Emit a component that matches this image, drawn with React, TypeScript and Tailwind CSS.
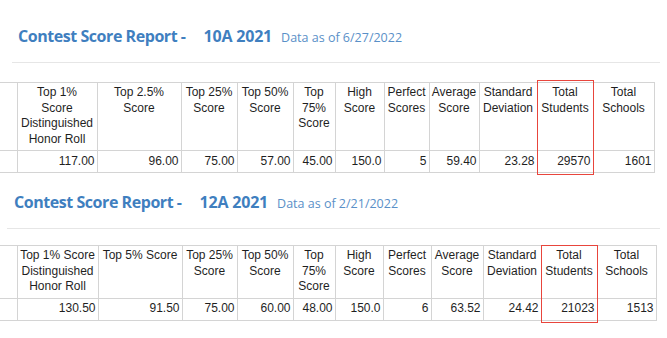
import React from "react";

type Section = {
  grade: string;
  date: string;
  cols: number[];
  headers: string[][];
  values: string[];
};

const sections: Section[] = [
  {
    grade: "10A 2021",
    date: "6/27/2022",
    cols: [80, 84, 56, 56, 42, 49, 45, 50, 58, 56, 61],
    headers: [
      ["Top 1%", "Score", "Distinguished", "Honor Roll"],
      ["Top 2.5%", "Score"],
      ["Top 25%", "Score"],
      ["Top 50%", "Score"],
      ["Top", "75%", "Score"],
      ["High", "Score"],
      ["Perfect", "Scores"],
      ["Average", "Score"],
      ["Standard", "Deviation"],
      ["Total", "Students"],
      ["Total", "Schools"],
    ],
    values: ["117.00", "96.00", "75.00", "57.00", "45.00", "150.0", "5", "59.40", "23.28", "29570", "1601"],
  },
  {
    grade: "12A 2021",
    date: "2/21/2022",
    cols: [81, 84, 55, 56, 42, 48, 48, 52, 58, 56, 59],
    headers: [
      ["Top 1% Score", "Distinguished", "Honor Roll"],
      ["Top 5% Score"],
      ["Top 25%", "Score"],
      ["Top 50%", "Score"],
      ["Top", "75%", "Score"],
      ["High", "Score"],
      ["Perfect", "Scores"],
      ["Average", "Score"],
      ["Standard", "Deviation"],
      ["Total", "Students"],
      ["Total", "Schools"],
    ],
    values: ["130.50", "91.50", "75.00", "60.00", "48.00", "150.0", "6", "63.52", "24.42", "21023", "1513"],
  },
];

const Title = ({ grade, date }: { grade: string; date: string }) => (
  <div className="flex h-[24px] items-baseline font-['Open_Sans',sans-serif] text-[#3f7fbf]">
    <span className="text-[16px] font-bold tracking-[-0.45px]">Contest Score Report -</span>
    <span className="ml-[18px] text-[16px] font-bold tracking-[-0.2px]">{grade}</span>
    <span className="ml-[9px] text-[12.5px] text-[#5a90c8]">Data as of {date}</span>
  </div>
);

const ScoreTable = ({ s, boxTop }: { s: Section; boxTop: string }) => (
  <table className="border-collapse font-['Liberation_Sans',Arial,sans-serif] text-[12px] leading-[15.5px] text-[#1f1f1f]">
    <thead>
      <tr>
        <th className="w-[17px] border-y border-[#d4d4d4] p-0" />
        {s.headers.map((h, i) => (
          <th
            key={i}
            style={{ width: s.cols[i] }}
            className="relative border border-[#d4d4d4] px-0 pt-[2px] pb-[3px] text-center align-top font-normal whitespace-nowrap"
          >
            {h.map((line, j) => (
              <div key={j}>{line}</div>
            ))}
            {i === 9 && (
              <div className={`pointer-events-none absolute -left-[1px] -right-[1px] ${boxTop} -bottom-[25px] border border-[#e8453c]`} />
            )}
          </th>
        ))}
      </tr>
    </thead>
    <tbody>
      <tr>
        <td className="h-[22px] border-y border-[#d4d4d4] p-0" />
        {s.values.map((v, i) => (
          <td key={i} className="h-[22px] border border-[#d4d4d4] pr-[2px] pl-0 text-right align-middle">
            {v}
          </td>
        ))}
      </tr>
    </tbody>
  </table>
);

export default function App() {
  return (
    <div className="h-[338px] w-[667px] overflow-hidden bg-white">
      <div className="pt-[24px]">
        <div className="pl-[18px]">
          <Title grade={sections[0].grade} date={sections[0].date} />
        </div>
        <div className="mt-[14px] ml-[12px] h-px w-[648px] bg-[#e6e6e6]" />
        <div className="mt-[19px]">
          <ScoreTable s={sections[0]} boxTop="-top-[3px]" />
        </div>
      </div>
      <div className="pt-[17px]">
        <div className="pl-[14px]">
          <Title grade={sections[1].grade} date={sections[1].date} />
        </div>
        <div className="mt-[14px] ml-[7px] h-px w-[653px] bg-[#e6e6e6]" />
        <div className="mt-[16px]">
          <ScoreTable s={sections[1]} boxTop="-top-[1px]" />
        </div>
      </div>
    </div>
  );
}
